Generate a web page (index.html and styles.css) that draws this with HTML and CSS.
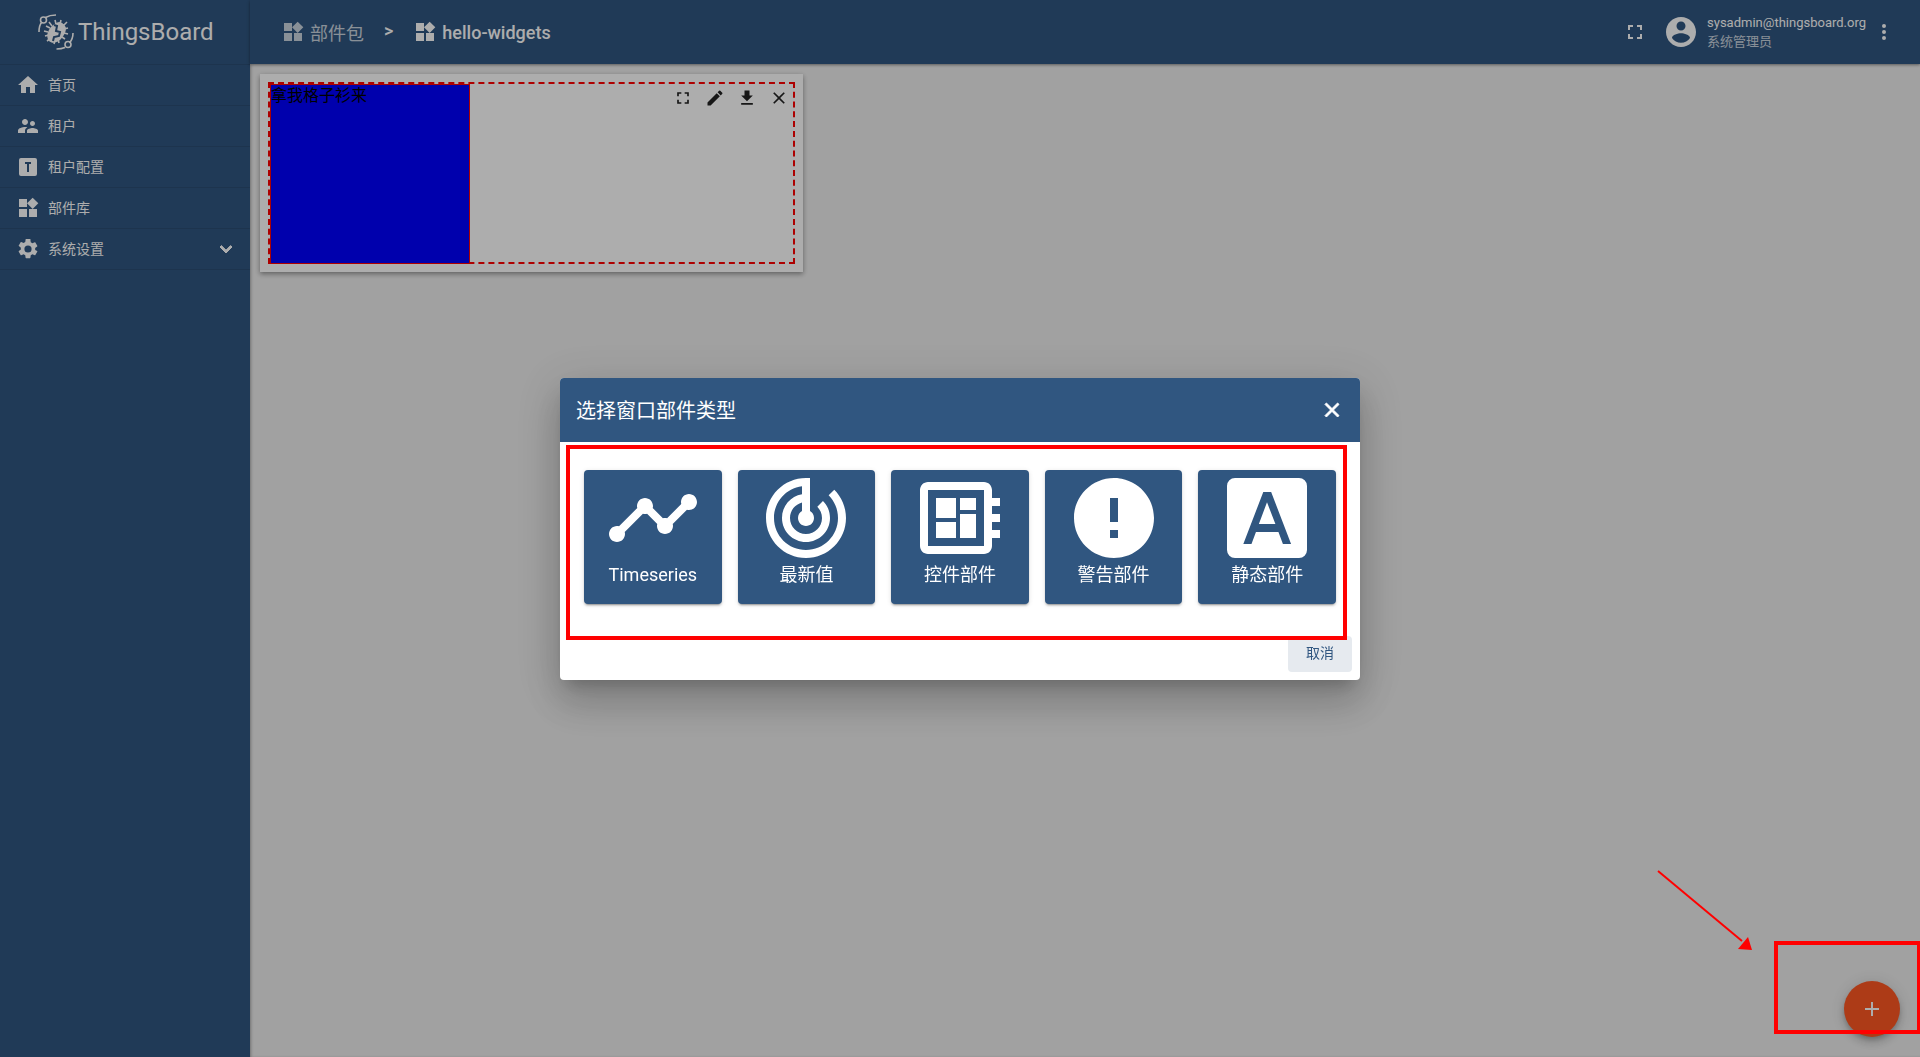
FILE: index.html
```html
<!DOCTYPE html>
<html lang="zh-CN">
<head>
<meta charset="utf-8">
<title>ThingsBoard</title>
<link rel="stylesheet" href="styles.css">
</head>
<body>
<svg class="sprite" aria-hidden="true">
  <symbol id="home" viewBox="0 0 24 24"><path d="M10 20v-6h4v6h5v-8h3L12 3 2 12h3v8z"/></symbol>
  <symbol id="people" viewBox="0 0 24 24"><path d="M16.5 12c1.38 0 2.49-1.12 2.49-2.5S17.88 7 16.5 7 14 8.12 14 9.5s1.12 2.5 2.5 2.5zM9 11c1.66 0 2.99-1.34 2.99-3S10.66 5 9 5 6 6.34 6 8s1.34 3 3 3zm7.500 3c-1.83 0-5.500.92-5.500 2.750V19h11v-2.250c0-1.830-3.670-2.750-5.500-2.750zM9 13c-2.330 0-7 1.170-7 3.500V19h7v-2.250c0-.85.33-2.340 2.370-3.470C10.500 13.100 9.660 13 9 13z"/></symbol>
  <symbol id="profile" viewBox="0 0 24 24"><path fill-rule="evenodd" d="M5 3h14a2 2 0 0 1 2 2v14a2 2 0 0 1-2 2H5a2 2 0 0 1-2-2V5a2 2 0 0 1 2-2zm4 4v2h2v8h2V9h2V7z"/></symbol>
  <symbol id="widgets" viewBox="0 0 24 24"><path d="M13 13v8h8v-8zM3 21h8v-8H3zM3 3v8h8V3zm13.660-1.310L11 7.340 16.660 13l5.660-5.660z"/></symbol>
  <symbol id="settings" viewBox="0 0 24 24"><path d="M19.140 12.940c.04-.3.06-.61.06-.94s-.02-.64-.07-.94l2.030-1.580c.18-.14.23-.41.12-.61l-1.920-3.320c-.12-.22-.37-.29-.59-.22l-2.390.96c-.5-.38-1.030-.7-1.620-.94l-.36-2.540A.48.48 0 0 0 13.920 2h-3.840c-.24 0-.43.17-.47.41l-.36 2.540c-.59.24-1.130.57-1.620.94l-2.390-.96c-.22-.08-.47 0-.59.22L2.740 8.470c-.12.21-.08.47.12.61l2.030 1.580c-.05.3-.09.63-.09.94s.02.64.07.94l-2.030 1.580c-.18.14-.23.41-.12.61l1.920 3.320c.12.22.37.29.59.22l2.390-.96c.5.38 1.030.7 1.620.94l.36 2.540c.05.24.24.41.48.41h3.840c.24 0 .44-.17.47-.41l.36-2.540c.59-.24 1.130-.56 1.620-.94l2.390.96c.22.08.47 0 .59-.22l1.920-3.320c.12-.22.07-.47-.12-.61zM12 15.600A3.600 3.600 0 1 1 12 8.400a3.600 3.600 0 0 1 0 7.200z"/></symbol>
  <symbol id="chevron" viewBox="0 0 24 24"><path d="M7.410 8.590 12 13.170l4.590-4.580L18 10l-6 6-6-6z" stroke="currentColor"/></symbol>
  <symbol id="fullscreen" viewBox="0 0 24 24"><path d="M7 14H5v5h5v-2H7zm-2-4h2V7h3V5H5zm12 7h-3v2h5v-5h-2zM14 5v2h3v3h2V5z"/></symbol>
  <symbol id="account" viewBox="0 0 24 24"><path d="M12 2C6.480 2 2 6.480 2 12s4.480 10 10 10 10-4.480 10-10S17.520 2 12 2zm0 3c1.660 0 3 1.340 3 3s-1.340 3-3 3-3-1.340-3-3 1.340-3 3-3zm0 14.200c-2.500 0-4.710-1.280-6-3.220.03-1.990 4-3.080 6-3.080 1.990 0 5.970 1.090 6 3.080-1.290 1.940-3.500 3.220-6 3.220z"/></symbol>
  <symbol id="more" viewBox="0 0 24 24"><path d="M12 8a2 2 0 1 0 0-4 2 2 0 0 0 0 4zm0 2a2 2 0 1 0 0 4 2 2 0 0 0 0-4zm0 6a2 2 0 1 0 0 4 2 2 0 0 0 0-4z"/></symbol>
  <symbol id="edit" viewBox="0 0 24 24"><path d="M3 17.250V21h3.750L17.810 9.940l-3.750-3.750zM20.710 7.040a1 1 0 0 0 0-1.410l-2.340-2.340a1 1 0 0 0-1.410 0l-1.830 1.830 3.750 3.750z"/></symbol>
  <symbol id="download" viewBox="0 0 24 24"><path d="M19 9h-4V3H9v6H5l7 7zM5 18v2h14v-2z"/></symbol>
  <symbol id="close" viewBox="0 0 24 24"><path d="M19 6.410 17.590 5 12 10.590 6.410 5 5 6.410 10.590 12 5 17.590 6.410 19 12 13.410 17.590 19 19 17.590 13.410 12z"/></symbol>
  <symbol id="add" viewBox="0 0 24 24"><path d="M19 13h-6v6h-2v-6H5v-2h6V5h2v6h6z"/></symbol>
  <symbol id="timeline" viewBox="0 0 24 24"><path d="M23 8c0 1.100-.9 2-2 2-.18 0-.35-.02-.51-.07l-3.560 3.550c.05.16.07.34.07.52 0 1.100-.9 2-2 2s-2-.9-2-2c0-.18.02-.36.07-.52l-2.550-2.550c-.16.05-.34.07-.52.07s-.36-.02-.52-.07l-4.550 4.560c.05.16.07.33.07.51 0 1.100-.9 2-2 2s-2-.9-2-2 .9-2 2-2c.18 0 .35.02.51.07l4.560-4.550C8.020 9.360 8 9.180 8 9c0-1.100.9-2 2-2s2 .9 2 2c0 .18-.02.36-.07.52l2.550 2.550c.16-.05.34-.07.52-.07s.36.02.52.07l3.550-3.560C19.020 8.350 19 8.180 19 8c0-1.100.9-2 2-2s2 .9 2 2z"/></symbol>
  <symbol id="latest" viewBox="0 0 24 24"><path d="m19.070 4.930-1.410 1.410C19.100 7.790 20 9.790 20 12c0 4.420-3.580 8-8 8s-8-3.580-8-8c0-4.080 3.050-7.440 7-7.930v2.020C8.160 6.570 6 9.030 6 12c0 3.310 2.690 6 6 6s6-2.690 6-6c0-1.660-.67-3.160-1.760-4.240l-1.410 1.410C15.550 9.900 16 10.900 16 12c0 2.210-1.790 4-4 4s-4-1.790-4-4c0-1.860 1.280-3.410 3-3.860v2.140c-.6.35-1 .98-1 1.720 0 1.100.9 2 2 2s2-.9 2-2c0-.74-.4-1.380-1-1.720V2h-1C6.480 2 2 6.480 2 12s4.480 10 10 10 10-4.480 10-10c0-2.760-1.120-5.260-2.930-7.070z"/></symbol>
  <symbol id="control" viewBox="0 0 24 24"><path d="M22 9V7h-2V5c0-1.100-.9-2-2-2H4c-1.100 0-2 .9-2 2v14c0 1.100.9 2 2 2h14c1.100 0 2-.9 2-2v-2h2v-2h-2v-2h2v-2h-2V9zm-4 10H4V5h14zM6 13h5v4H6zm6-6h4v3h-4zM6 7h5v5H6zm6 4h4v6h-4z"/></symbol>
  <symbol id="error" viewBox="0 0 24 24"><path d="M12 2C6.480 2 2 6.480 2 12s4.480 10 10 10 10-4.480 10-10S17.520 2 12 2zm1 15h-2v-2h2zm0-4h-2V7h2z"/></symbol>
  <symbol id="static" viewBox="0 0 24 24"><path fill-rule="evenodd" d="M4 2h16a2 2 0 0 1 2 2v16a2 2 0 0 1-2 2H4a2 2 0 0 1-2-2V4a2 2 0 0 1 2-2zm7.070 3.500L6.080 18.500h2.040l1.120-3h5.620l1.120 3h2.040l-4.980-13zM9.970 13.500 12 8.080l2.100 5.420z"/></symbol>
</svg>

<div class="app">
  <aside class="sidebar">
    <a class="brand" href="#">
      <svg class="brand-mark" viewBox="0 0 36 36" fill="none" stroke="currentColor" stroke-width="1.600">
        <path d="M1 18C1 14 2 10 4 8M7.500 3.500C10 2 14 1 18 1M35 19c0 4-1 7-3.500 10M27 33.500c-3 1.300-5 1.500-8.500 1.500"/>
        <circle cx="5.500" cy="6" r="3"/><circle cx="30" cy="30.500" r="3"/>
        <path d="M11 8l3 4M17 6l1 4M23 6l-1 4M29 8l-4 4M30 14l-4 1M30 20l-4-1M27 25l-3-2M21 29l-1-4M16 30l1-4M9 27l4-3M7 22l4-1M6 17l4 1M8 12l4 2"/>
        <path fill="currentColor" stroke="none" d="M22 8c3 1 5 3 6 6 0 4-2 8-6 12-4 3-8 4-11 1-3-4-2-9 2-14 3-3 6-5 9-5z"/>
        <path class="brand-cut" d="M16 11l3 1-1 5 4 1-1 4-5 1-1 4"/>
      </svg>
      <span>ThingsBoard</span>
    </a>
    <nav class="menu">
      <a href="#"><svg class="icon"><use href="#home"/></svg><span>首页</span></a>
      <a href="#"><svg class="icon"><use href="#people"/></svg><span>租户</span></a>
      <a href="#"><svg class="icon"><use href="#profile"/></svg><span>租户配置</span></a>
      <a href="#"><svg class="icon"><use href="#widgets"/></svg><span>部件库</span></a>
      <a href="#"><svg class="icon"><use href="#settings"/></svg><span>系统设置</span><svg class="icon chevron"><use href="#chevron"/></svg></a>
    </nav>
  </aside>

  <div class="page">
    <header class="toolbar">
      <nav class="breadcrumb">
        <a class="parent" href="#"><svg class="icon"><use href="#widgets"/></svg><span>部件包</span></a>
        <span class="separator">&gt;</span>
        <a href="#"><svg class="icon"><use href="#widgets"/></svg><span>hello-widgets</span></a>
      </nav>
      <div class="user">
        <button class="icon-button" type="button" aria-label="全屏"><svg class="icon"><use href="#fullscreen"/></svg></button>
        <svg class="icon avatar"><use href="#account"/></svg>
        <div class="user-info">
          <span>sysadmin@thingsboard.org</span>
          <span class="role">系统管理员</span>
        </div>
        <button class="icon-button more" type="button" aria-label="更多"><svg class="icon"><use href="#more"/></svg></button>
      </div>
    </header>

    <main class="content">
      <article class="widget">
        <div class="widget-frame">
          <div class="widget-body">拿我格子衫来</div>
          <div class="widget-actions">
            <button type="button" aria-label="全屏"><svg class="icon"><use href="#fullscreen"/></svg></button>
            <button type="button" aria-label="编辑"><svg class="icon"><use href="#edit"/></svg></button>
            <button type="button" aria-label="导出"><svg class="icon"><use href="#download"/></svg></button>
            <button type="button" aria-label="删除"><svg class="icon"><use href="#close"/></svg></button>
          </div>
        </div>
      </article>
      <button class="fab" type="button" aria-label="添加"><svg class="icon"><use href="#add"/></svg></button>
    </main>
  </div>
</div>

<div class="backdrop">
  <section class="dialog" role="dialog" aria-labelledby="dialog-title">
    <header class="dialog-header">
      <h2 id="dialog-title">选择窗口部件类型</h2>
      <button class="icon-button close" type="button" aria-label="关闭"><svg class="icon"><use href="#close"/></svg></button>
    </header>
    <div class="types">
      <button type="button"><svg class="icon"><use href="#timeline"/></svg><span>Timeseries</span></button>
      <button type="button"><svg class="icon"><use href="#latest"/></svg><span>最新值</span></button>
      <button type="button"><svg class="icon"><use href="#control"/></svg><span>控件部件</span></button>
      <button type="button"><svg class="icon"><use href="#error"/></svg><span>警告部件</span></button>
      <button type="button"><svg class="icon"><use href="#static"/></svg><span>静态部件</span></button>
    </div>
    <footer class="dialog-footer"><button type="button">取消</button></footer>
    <div class="mark mark-types"></div>
  </section>
</div>

<div class="mark mark-fab"></div>
<svg class="arrow" viewBox="0 0 100 84"><path d="M4 4 88 74" fill="none" stroke="#f00" stroke-width="2"/><path d="M98 83 84 82 94 70z" fill="#f00"/></svg>
</body>
</html>
```
FILE: styles.css
```css
*, *::before, *::after { box-sizing: border-box; }

body {
  margin: 0;
  font-family: Roboto, "Noto Sans CJK SC", sans-serif;
  font-size: 14px;
  color: #000;
}

a { color: inherit; text-decoration: none; }

button {
  padding: 0;
  border: 0;
  background: none;
  color: inherit;
  font: inherit;
  cursor: pointer;
}

.sprite { display: none; }

.icon {
  display: block;
  flex: none;
  width: 24px;
  height: 24px;
  fill: currentColor;
}

.app { display: flex; min-height: 100vh; }

/* Side menu */
.sidebar {
  flex: none;
  width: 250px;
  background: #305680;
  color: #fff;
}

.brand {
  display: flex;
  align-items: center;
  gap: 4px;
  height: 64px;
  padding-left: 38px;
  font-size: 24px;
}

.brand-mark { width: 36px; height: 36px; }
.brand-cut { stroke: #305680; stroke-width: 2; }

.menu { border-top: 1px solid #2b4d73; }

.menu a {
  display: flex;
  align-items: center;
  gap: 8px;
  height: 41px;
  padding: 0 12px 0 16px;
  border-bottom: 1px solid #2b4d73;
}

.menu span { padding-bottom: 3px; }

.chevron { margin-left: auto; }

/* Main column */
.page { display: flex; flex: 1; flex-direction: column; min-width: 0; }

.toolbar {
  position: relative;
  display: flex;
  align-items: center;
  justify-content: space-between;
  height: 64px;
  padding: 0 24px 0 31px;
  background: #305680;
  color: #fff;
  box-shadow: 0 1px 3px rgba(0, 0, 0, .4);
}

.breadcrumb, .breadcrumb a { display: flex; align-items: center; }
.breadcrumb { gap: 20px; font-size: 18px; font-weight: 500; }
.breadcrumb a { gap: 5px; }
.breadcrumb .parent { opacity: .75; font-weight: 400; }
.separator { padding-bottom: 3px; font-size: 18px; }

.user { display: flex; align-items: center; }
.avatar { width: 36px; height: 36px; margin: 0 8px 0 16px; }
.user-info { display: flex; flex-direction: column; font-size: 13px; line-height: 19px; }
.role { opacity: .75; }
.more { margin-left: 6px; }

.content {
  flex: 1;
  padding: 10px;
  background: #eee;
  box-shadow: inset 2px 0 3px -1px rgba(0, 0, 0, .3);
}

.widget {
  width: 543px;
  padding: 8px;
  background: #fff;
  box-shadow: 0 2px 5px rgba(0, 0, 0, .4);
}

.widget-frame {
  display: flex;
  justify-content: space-between;
  height: 182px;
  border: 2px dashed #f00;
}

.widget-body {
  width: 200px;
  height: 180px;
  border: 1px solid #f00;
  background: #00f;
  font-size: 16px;
  line-height: 22px;
}

.widget-actions { display: flex; gap: 12px; height: 20px; margin: 4px 4px 0 0; }
.widget-actions .icon { width: 20px; height: 20px; }
.widget-actions button { color: #222; }

.fab {
  position: fixed;
  right: 20px;
  bottom: 20px;
  display: grid;
  place-items: center;
  width: 56px;
  height: 56px;
  border-radius: 50%;
  background: #ff5722;
  color: #fff;
  box-shadow: 0 3px 5px -1px rgba(0, 0, 0, .2), 0 6px 10px rgba(0, 0, 0, .14), 0 1px 18px rgba(0, 0, 0, .12);
}

/* Dialog */
.backdrop {
  position: fixed;
  inset: 0;
  display: grid;
  place-items: center;
  background: rgba(0, 0, 0, .32);
}

.dialog {
  position: relative;
  width: 800px;
  max-width: 80vw;
  border-radius: 4px;
  background: #fff;
  box-shadow: 0 11px 15px -7px rgba(0, 0, 0, .2), 0 24px 38px 3px rgba(0, 0, 0, .14), 0 9px 46px 8px rgba(0, 0, 0, .12);
}

.dialog-header {
  display: flex;
  align-items: center;
  justify-content: space-between;
  height: 64px;
  padding: 0 16px;
  border-radius: 4px 4px 0 0;
  background: #305680;
  color: #fff;
}

.dialog-header h2 { margin: 0; font-size: 20px; font-weight: 400; }
.close .icon { stroke: currentColor; stroke-width: 1px; }

.types {
  display: grid;
  grid-template-columns: repeat(5, 1fr);
  gap: 16px;
  padding: 28px 24px;
}

.types button {
  display: flex;
  flex-direction: column;
  align-items: center;
  height: 134px;
  border-radius: 4px;
  background: #305680;
  color: #fff;
  font-size: 18px;
  line-height: 18px;
  box-shadow: 0 3px 1px -2px rgba(0, 0, 0, .2), 0 2px 2px rgba(0, 0, 0, .14), 0 1px 5px rgba(0, 0, 0, .12);
}

.types .icon { width: 96px; height: 96px; }

.dialog-footer { display: flex; justify-content: flex-end; padding: 4px 8px 8px; }

.dialog-footer button {
  width: 64px;
  height: 36px;
  padding-bottom: 4px;
  border-radius: 4px;
  background: #e6eaef;
  color: #305680;
}

/* Red annotations drawn over the page */
.mark { position: absolute; border: 4px solid #f00; pointer-events: none; }
.mark-types { inset: 67px 13px 40px 6px; }
.mark-fab { position: fixed; right: -1px; bottom: 23px; width: 147px; height: 93px; }
.arrow { position: fixed; right: 166px; bottom: 106px; width: 100px; height: 84px; pointer-events: none; }
```
